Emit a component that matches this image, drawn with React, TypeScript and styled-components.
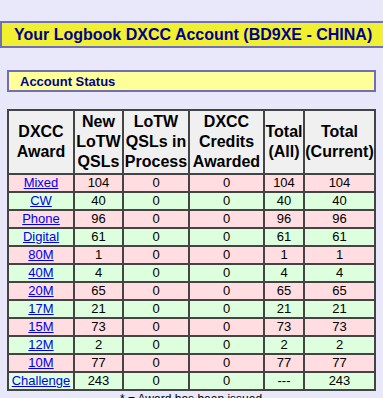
import * as React from "react";
import styled, { createGlobalStyle } from "styled-components";

type Row = { award: string; fresh: string; inProcess: string; awarded: string; all: string; current: string };

const rows: Row[] = [
  { award: "Mixed", fresh: "104", inProcess: "0", awarded: "0", all: "104", current: "104" },
  { award: "CW", fresh: "40", inProcess: "0", awarded: "0", all: "40", current: "40" },
  { award: "Phone", fresh: "96", inProcess: "0", awarded: "0", all: "96", current: "96" },
  { award: "Digital", fresh: "61", inProcess: "0", awarded: "0", all: "61", current: "61" },
  { award: "80M", fresh: "1", inProcess: "0", awarded: "0", all: "1", current: "1" },
  { award: "40M", fresh: "4", inProcess: "0", awarded: "0", all: "4", current: "4" },
  { award: "20M", fresh: "65", inProcess: "0", awarded: "0", all: "65", current: "65" },
  { award: "17M", fresh: "21", inProcess: "0", awarded: "0", all: "21", current: "21" },
  { award: "15M", fresh: "73", inProcess: "0", awarded: "0", all: "73", current: "73" },
  { award: "12M", fresh: "2", inProcess: "0", awarded: "0", all: "2", current: "2" },
  { award: "10M", fresh: "77", inProcess: "0", awarded: "0", all: "77", current: "77" },
  { award: "Challenge", fresh: "243", inProcess: "0", awarded: "0", all: "---", current: "243" },
];

const App = () => {
  return (
    <>
      <GlobalStyle />
      <SPage>
        <STitleBar>Your Logbook DXCC Account (BD9XE - CHINA)</STitleBar>
        <SContent>
          <SSection>Account Status</SSection>
          <STable>
            <colgroup>
              <col style={{ width: 66 }} />
              <col style={{ width: 49 }} />
              <col style={{ width: 66 }} />
              <col style={{ width: 75 }} />
              <col style={{ width: 40 }} />
              <col style={{ width: 71 }} />
            </colgroup>
            <thead>
              <tr>
                <SHead>DXCC<br />Award</SHead>
                <SHead>New<br />LoTW<br />QSLs</SHead>
                <SHead>LoTW<br />QSLs in<br />Process</SHead>
                <SHead>DXCC<br />Credits<br />Awarded</SHead>
                <SHead>Total<br />(All)</SHead>
                <SHead>Total<br />(Current)</SHead>
              </tr>
            </thead>
            <tbody>
              {rows.map((r, i) => (
                <SRow key={r.award} $odd={i % 2 === 0}>
                  <SCell><SLink href="#">{r.award}</SLink></SCell>
                  <SCell>{r.fresh}</SCell>
                  <SCell>{r.inProcess}</SCell>
                  <SCell>{r.awarded}</SCell>
                  <SCell>{r.all}</SCell>
                  <SCell>{r.current}</SCell>
                </SRow>
              ))}
            </tbody>
          </STable>
          <SNote>* = Award has been issued</SNote>
        </SContent>
      </SPage>
    </>
  );
};

export default App;

const GlobalStyle = createGlobalStyle`
  html, body {
    margin: 0;
    background: #e8e8fa;
    overflow: hidden;
  }
`;

const SPage = styled.div`
  font-family: "Liberation Sans", Arial, sans-serif;
  padding-top: 21px;
`;

const STitleBar = styled.div`
  margin-right: -10px;
  height: 23px;
  padding: 0 0 0 12px;
  background: #f0f030;
  border: 2px solid #7070b8;
  color: #000090;
  font-size: 16px;
  font-weight: bold;
  line-height: 24px;
  white-space: nowrap;
`;

const SContent = styled.div`
  padding: 22px 7px 0 7px;
`;

const SSection = styled.div`
  width: 354px;
  height: 18px;
  padding-left: 11px;
  background: #ffff99;
  border: 2px solid #7070b0;
  color: #000090;
  font-size: 13px;
  font-weight: bold;
  line-height: 19px;
`;

const STable = styled.table`
  margin-top: 17px;
  width: 368px;
  border-collapse: collapse;
  border: 2px solid #444;
  table-layout: fixed;
  background: #f0f0f0;
`;

const SHead = styled.th`
  height: 62px;
  padding: 0;
  border: 2px solid #444;
  background: #f0f0f0;
  color: #000;
  font-size: 16px;
  font-weight: bold;
  line-height: 20px;
  text-align: center;
  white-space: nowrap;
`;

const SRow = styled.tr<{ $odd: boolean }>`
  background: ${(p) => (p.$odd ? "#ffdde0" : "#ddffdd")};
`;

const SCell = styled.td`
  height: 16px;
  padding: 0;
  border: 2px solid #444;
  color: #000;
  font-size: 13px;
  line-height: 16px;
  text-align: center;
  white-space: nowrap;
`;

const SLink = styled.a`
  color: #0000ee;
  text-decoration: underline;
`;

const SNote = styled.div`
  width: 368px;
  margin-top: 1px;
  font-size: 12px;
  text-align: center;
  color: #000;
`;
